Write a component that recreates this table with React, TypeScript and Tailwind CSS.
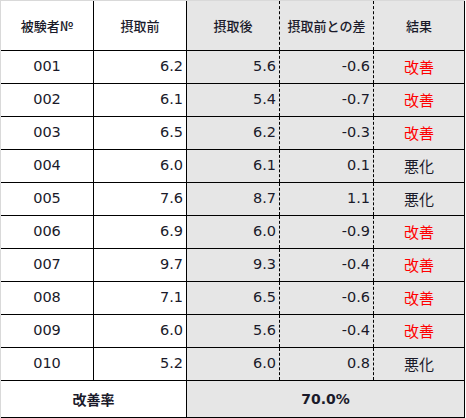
import React from "react";

const rows: [string, string, string, string, string][] = [
  ["001", "6.2", "5.6", "-0.6", "改善"],
  ["002", "6.1", "5.4", "-0.7", "改善"],
  ["003", "6.5", "6.2", "-0.3", "改善"],
  ["004", "6.0", "6.1", "0.1", "悪化"],
  ["005", "7.6", "8.7", "1.1", "悪化"],
  ["006", "6.9", "6.0", "-0.9", "改善"],
  ["007", "9.7", "9.3", "-0.4", "改善"],
  ["008", "7.1", "6.5", "-0.6", "改善"],
  ["009", "6.0", "5.6", "-0.4", "改善"],
  ["010", "5.2", "6.0", "0.8", "悪化"],
];

export default function App() {
  return (
    <div className="w-[466px] h-[418px] bg-white font-['DejaVu_Sans','Noto_Sans_CJK_JP',sans-serif]">
      <div className="w-[465px] border-l border-t border-[#d9d9d9] text-[#1a1a2a]">
        <div className="flex h-[50px] border-b border-black text-[13px] font-['Noto_Sans_CJK_JP',sans-serif] font-medium">
          <div className="w-[93px] flex items-center justify-center border-r border-black">被験者№</div>
          <div className="w-[93px] flex items-center justify-center border-r border-black">摂取前</div>
          <div className="w-[93px] flex items-center justify-center bg-[#e6e6e6] border-r border-dashed border-black">摂取後</div>
          <div className="w-[94px] flex items-center justify-center bg-[#e6e6e6] border-r border-dashed border-black">摂取前との差</div>
          <div className="w-[91px] flex items-center justify-center bg-[#e6e6e6] border-r border-black">結果</div>
        </div>
        {rows.map((r) => (
          <div key={r[0]} className="flex h-[33px] border-b border-black text-[14.5px]">
            <div className="w-[93px] flex items-center justify-center border-r border-black">{r[0]}</div>
            <div className="w-[93px] flex items-center justify-end pr-[3px] border-r border-black">{r[1]}</div>
            <div className="w-[93px] flex items-center justify-end pr-[3px] bg-[#e6e6e6] border-r border-dashed border-black">{r[2]}</div>
            <div className="w-[94px] flex items-center justify-end pr-[3px] bg-[#e6e6e6] border-r border-dashed border-black">{r[3]}</div>
            <div
              className={
                r[4] === "改善"
                  ? "w-[91px] flex items-center justify-center text-[15px] font-['Noto_Sans_CJK_JP',sans-serif] bg-[#e6e6e6] border-r border-black text-[#ff0000]"
                  : "w-[91px] flex items-center justify-center text-[15px] font-['Noto_Sans_CJK_JP',sans-serif] bg-[#e6e6e6] border-r border-black"
              }
            >
              {r[4]}
            </div>
          </div>
        ))}
        <div className="flex h-[37px] border-b border-black text-[14px] font-bold">
          <div className="w-[186px] flex items-center justify-center border-r border-black font-['Noto_Sans_CJK_JP',sans-serif]">改善率</div>
          <div className="w-[278px] flex items-center justify-center bg-[#e6e6e6] border-r border-black">70.0%</div>
        </div>
      </div>
    </div>
  );
}
